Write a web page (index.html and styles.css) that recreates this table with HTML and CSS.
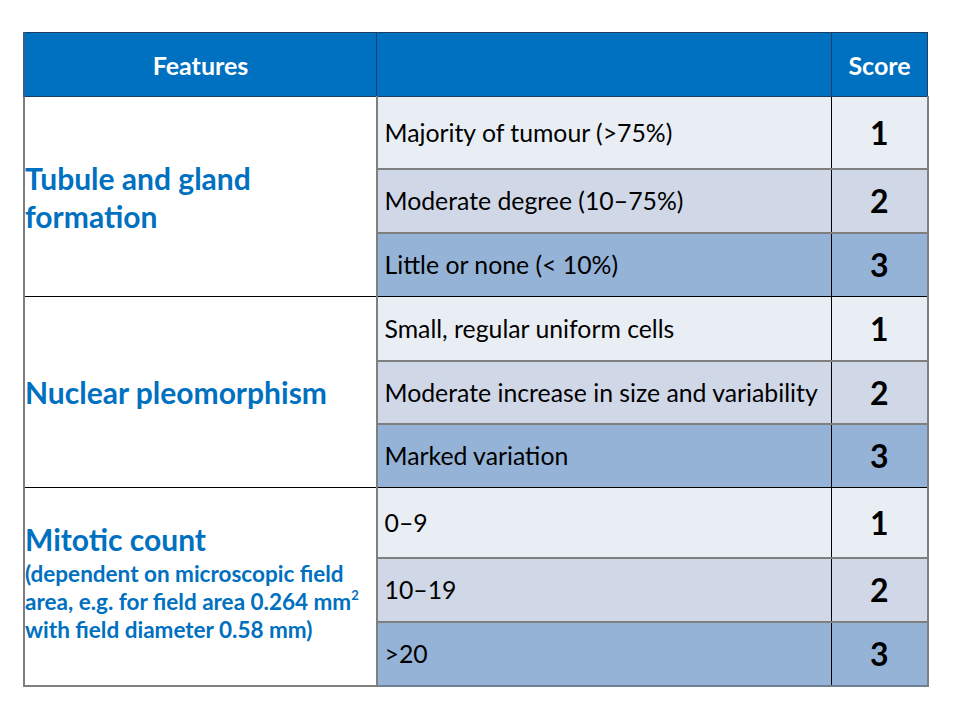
FILE: index.html
```html
<!DOCTYPE html>
<html>
<head>
<meta charset="utf-8">
<link rel="stylesheet" href="styles.css">
</head>
<body>
<table class="grade">
  <thead>
    <tr class="head">
      <th class="c-feat">Features</th>
      <th class="c-desc"></th>
      <th class="c-score">Score</th>
    </tr>
  </thead>
  <tbody>
    <tr class="r1 h72">
      <td class="feat group-end" rowspan="3"><span class="title">Tubule and gland<br>formation</span></td>
      <td class="desc">Majority of tumour (&gt;75%)</td>
      <td class="score">1</td>
    </tr>
    <tr class="r2 h64">
      <td class="desc">Moderate degree (10&#8211;75%)</td>
      <td class="score">2</td>
    </tr>
    <tr class="r3 h64 end">
      <td class="desc">Little or none (&lt; 10%)</td>
      <td class="score">3</td>
    </tr>
    <tr class="r1 h64">
      <td class="feat group-end" rowspan="3"><span class="title">Nuclear pleomorphism</span></td>
      <td class="desc">Small, regular uniform cells</td>
      <td class="score">1</td>
    </tr>
    <tr class="r2 h63">
      <td class="desc">Moderate increase in size and variability</td>
      <td class="score">2</td>
    </tr>
    <tr class="r3 h64 end">
      <td class="desc">Marked variation</td>
      <td class="score">3</td>
    </tr>
    <tr class="r1 h70">
      <td class="feat last" rowspan="3">
        <span class="title">Mitotic count</span>
        <span class="note">(dependent on microscopic field<br>area, e.g. for field area 0.264 mm<sup>2</sup><br>with field diameter 0.58 mm)</span>
      </td>
      <td class="desc">0&#8211;9</td>
      <td class="score">1</td>
    </tr>
    <tr class="r2 h64">
      <td class="desc">10&#8211;19</td>
      <td class="score">2</td>
    </tr>
    <tr class="r3 h64 last">
      <td class="desc">&gt;20</td>
      <td class="score">3</td>
    </tr>
  </tbody>
</table>
</body>
</html>
```

FILE: styles.css
```css
html, body {
  margin: 0;
  padding: 0;
  background: #ffffff;
}

body {
  font-family: "Lato", "Liberation Sans", sans-serif;
  color: #000000;
}

.grade {
  margin: 32px 0 0 23px;
  border-collapse: collapse;
  table-layout: fixed;
  width: 900px;
}

.c-feat { width: 351px; }
.c-desc { width: 454px; }
.c-score { width: 95px; }

.head th {
  height: 63px;
  padding: 0;
  background: #0070c0;
  color: #ffffff;
  font-weight: 700;
  font-size: 25px;
  border: 1px solid #1d3f66;
  vertical-align: middle;
}

.head .c-feat { text-align: center; border-left: 2px solid #3a5f86; }
.head .c-score { text-align: center; font-size: 25px; }

td {
  padding: 0;
  vertical-align: middle;
}

.h72 { height: 72px; }
.h70 { height: 70px; }
.h64 { height: 64px; }
.h63 { height: 63px; }

.feat {
  background: #ffffff;
  border-left: 2px solid #7f7f7f;
  border-right: 2px solid #7f7f7f;
  padding: 0;
  color: #0070c0;
  font-weight: 700;
}

.feat.group-end { border-bottom: 1px solid #000000; }
.feat.last { border-bottom: 2px solid #7f7f7f; }

.title {
  display: block;
  font-size: 30px;
  line-height: 38px;
  white-space: nowrap;
}

.note {
  display: block;
  font-size: 22.5px;
  line-height: 28px;
  padding-top: 2px;
  padding-bottom: 8px;
  white-space: nowrap;
}

.note sup {
  font-size: 13px;
  line-height: 0;
  vertical-align: 10px;
}

.desc {
  font-size: 24.8px;
  padding-left: 7px;
  border-bottom: 2px solid #7f7f7f;
  border-right: 1px solid #000000;
  white-space: nowrap;
}

.score {
  font-size: 32px;
  font-weight: 700;
  text-align: center;
  border-bottom: 2px solid #7f7f7f;
  border-right: 2px solid #7f7f7f;
}

.r1 .desc, .r1 .score { background: #e9eef4; }
.r2 .desc, .r2 .score { background: #d0d8e8; }
.r3 .desc, .r3 .score { background: #95b3d7; }

.end .desc, .end .score { border-bottom: 1px solid #000000; }
.last .desc, .last .score { border-bottom: 2px solid #6f7f96; }
```
